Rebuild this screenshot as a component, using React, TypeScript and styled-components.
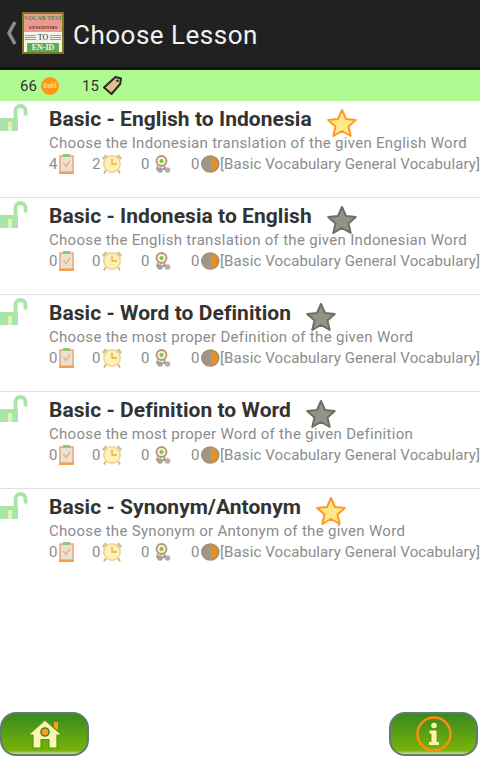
import styled, { createGlobalStyle } from "styled-components";

type Lesson = {
  title: string;
  description: string;
  tested: number;
  timed: number;
  gold: boolean;
};

const LESSONS: Lesson[] = [
  { title: "Basic - English to Indonesia", description: "Choose the Indonesian translation of the given English Word", tested: 4, timed: 2, gold: true },
  { title: "Basic - Indonesia to English", description: "Choose the English translation of the given Indonesian Word", tested: 0, timed: 0, gold: false },
  { title: "Basic - Word to Definition", description: "Choose the most proper Definition of the given Word", tested: 0, timed: 0, gold: false },
  { title: "Basic - Definition to Word", description: "Choose the most proper Word of the given Definition", tested: 0, timed: 0, gold: false },
  { title: "Basic - Synonym/Antonym", description: "Choose the Synonym or Antonym of the given Word", tested: 0, timed: 0, gold: true },
];

const LockIcon = () => (
  <svg width="28" height="28" viewBox="0 0 28 28" style={{ display: "block" }}>
    <path d="M15.500 15V8a5 5 0 0 1 10 0v4.500" fill="none" stroke="#a9e4a9" strokeWidth="3.800" />
    <rect x="-2" y="15" width="20" height="13" rx="1" fill="#a9e4a9" />
    <rect x="8" y="19" width="4" height="9" fill="#e9f0b4" />
  </svg>
);

const StarIcon = ({ gold }: { gold: boolean }) => (
  <svg width="30" height="30" viewBox="0 0 30 30">
    <path
      d="M15 2l4 9 9.800 1-7.300 6.500 2.200 9.500L15 23l-8.700 5 2.200-9.500L1.200 12l9.800-1z"
      fill={gold ? "#ffe88c" : "#939488"}
      stroke={gold ? "#ff9a1e" : "#6c6f65"}
      strokeWidth="2"
      strokeLinejoin="round"
    />
  </svg>
);

const ClipboardIcon = () => (
  <svg width="15" height="20" viewBox="0 0 15 20">
    <rect x="1" y="2" width="13" height="16.500" fill="#e6e2d8" stroke="#eca66a" strokeWidth="1.500" />
    <rect x="4" y="0" width="7" height="3" fill="#92c77e" />
    <path d="M4.500 9l2.500 3.500 4-5.500" fill="none" stroke="#ecb07a" strokeWidth="1.400" />
    <rect x="0" y="17.500" width="15" height="2.500" fill="#f2a04d" />
  </svg>
);

const ClockIcon = () => (
  <svg width="20" height="20" viewBox="0 0 20 20">
    <path d="M.8 5L4.500 1.200M19.200 5L15.500 1.200" stroke="#d6c08e" strokeWidth="2.600" />
    <path d="M4 16l-2 3.500M16 16l2 3.500" stroke="#d8b577" strokeWidth="1.800" />
    <circle cx="10" cy="10" r="8.200" fill="#fff0b4" stroke="#e8d199" strokeWidth="1.400" />
    <path d="M10 4.500V10h5" fill="none" stroke="#e9a94c" strokeWidth="1.300" />
  </svg>
);

const MedalIcon = () => (
  <svg width="18" height="18" viewBox="0 0 18 18">
    <path d="M3 10l-1 5h4zM11 10l1 5h-4z" fill="#b78d72" />
    <circle cx="7.500" cy="6" r="5" fill="#f3eee0" stroke="#b8946f" strokeWidth="1.800" />
    <circle cx="7.500" cy="6" r="2" fill="#7fc73f" />
    <circle cx="6" cy="15" r="2.800" fill="#a2a2a2" />
    <circle cx="13.500" cy="15" r="2.800" fill="#b0b0b0" />
  </svg>
);

const PieIcon = () => (
  <svg width="21" height="20" viewBox="0 0 21 20">
    <ellipse cx="10.500" cy="10" rx="9.800" ry="9.300" fill="#99988c" stroke="#b78a5a" strokeWidth="1.400" />
    <path d="M11 2.500a7.500 7.500 0 0 1 0 15z" fill="#e58f2a" />
  </svg>
);

const CoinIcon = () => (
  <svg width="18" height="18" viewBox="0 0 18 18">
    <circle cx="9" cy="9" r="9" fill="#ff980e" />
    <text x="9" y="11" fontSize="6.500" fontWeight="700" fill="#ffd9a0" textAnchor="middle" fontFamily="Roboto, sans-serif">
      Gold
    </text>
  </svg>
);

const TagIcon = () => (
  <svg width="19" height="19" viewBox="0 0 19 19">
    <path d="M12.500 1l5.500 1.500-.8 5.500-8.700 10L1 11.500z" fill="#dfc086" stroke="#2b2a22" strokeWidth="2" strokeLinejoin="round" />
    <circle cx="14.500" cy="4.800" r="1.300" fill="#2b2a22" />
  </svg>
);

const HomeIcon = () => (
  <svg width="36" height="30" viewBox="0 0 36 30">
    <rect x="27" y="3" width="4" height="9" fill="#ff9a1e" />
    <path d="M1 16L18 1l17 15h-5v13h-8v-8.500h-8V29H6V16z" fill="#fff3b0" stroke="#4d9a14" strokeWidth="1.200" strokeLinejoin="round" />
    <circle cx="18" cy="13" r="4" fill="#ff9a1e" stroke="#3d8a1a" strokeWidth="1.600" />
  </svg>
);

const InfoIcon = () => (
  <svg width="36" height="36" viewBox="0 0 36 36">
    <circle cx="18" cy="18" r="16.500" fill="none" stroke="#ff8c12" strokeWidth="2.600" />
    <circle cx="18" cy="9.500" r="2.800" fill="#fff3b0" />
    <path d="M13.500 14.500h7v11.500h2.500v3h-10v-3h2.500v-8.500h-2z" fill="#fff3b0" />
  </svg>
);

const App = () => (
  <Page>
    <GlobalStyle />
    <Header>
      <BackChevron viewBox="0 0 11 24">
        <path d="M9 1L3 12l6 11" fill="none" stroke="#8a8a8a" strokeWidth="3.600" />
      </BackChevron>
      <Logo>
        <LogoBanner>
          <LogoTop>VOCAB TEST</LogoTop>
          <LogoMiddle>SYNONYMS</LogoMiddle>
        </LogoBanner>
        <LogoToRow>
          <LogoFiller />
          TO
          <LogoFiller />
        </LogoToRow>
        <LogoBadge>EN-ID</LogoBadge>
      </Logo>
      <HeaderTitle>Choose Lesson</HeaderTitle>
    </Header>
    <StatusBar>
      <Stat>
        66 <CoinIcon />
      </Stat>
      <Stat>
        15 <TagIcon />
      </Stat>
    </StatusBar>
    <LessonList>
      {LESSONS.map((lesson) => (
        <LessonRow key={lesson.title}>
          <LockSlot>
            <LockIcon />
          </LockSlot>
          <LessonBody>
            <TitleLine>
              <LessonTitle>{lesson.title}</LessonTitle>
              <StarSlot>
                <StarIcon gold={lesson.gold} />
              </StarSlot>
            </TitleLine>
            <Description>{lesson.description}</Description>
            <Meta>
              <MetaItem $width={43}>
                {lesson.tested}
                <ClipboardIcon />
              </MetaItem>
              <MetaItem $width={49}>
                {lesson.timed}
                <ClockIcon />
              </MetaItem>
              <MetaItem $width={50} $gap={5}>
                0
                <MedalIcon />
              </MetaItem>
              <MetaItem $width={29}>
                0
                <PieIcon />
              </MetaItem>
              <Category>[Basic Vocabulary General Vocabulary]</Category>
            </Meta>
          </LessonBody>
        </LessonRow>
      ))}
    </LessonList>
    <Footer>
      <FooterButton aria-label="Home">
        <HomeIcon />
      </FooterButton>
      <FooterButton aria-label="Info">
        <InfoIcon />
      </FooterButton>
    </Footer>
  </Page>
);

export default App;

const GlobalStyle = createGlobalStyle`
  html, body {
    margin: 0;
    padding: 0;
    background: #ffffff;
  }
  body {
    font-family: "Roboto", "Liberation Sans", sans-serif;
  }
`;

const Page = styled.div`
  display: flex;
  flex-direction: column;
  width: 480px;
  height: 760px;
  overflow: hidden;
  background: #ffffff;
`;

const Header = styled.header`
  display: flex;
  align-items: center;
  height: 70px;
  flex-shrink: 0;
  padding: 0 0 1px 6px;
  background: #212121;
  box-sizing: border-box;
  border-bottom: 3px solid #141414;
`;

const BackChevron = styled.svg`
  width: 11px;
  height: 24px;
  margin-right: 5px;
`;

const Logo = styled.div`
  display: flex;
  flex-direction: column;
  align-items: center;
  width: 42px;
  height: 42px;
  flex-shrink: 0;
  box-sizing: border-box;
  border: 2px solid #7a7a18;
  background: #f4f4ea;
  font-family: "Liberation Serif", serif;
  overflow: hidden;
  margin-right: 9px;
`;

const LogoBanner = styled.div`
  width: 100%;
  height: 18px;
  background: #e99a94;
  font-weight: 700;
  text-align: center;
`;

const LogoTop = styled.div`
  color: #4f8a36;
  font-size: 6px;
  line-height: 9px;
  white-space: nowrap;
`;

const LogoMiddle = styled.div`
  color: #6e2a22;
  font-size: 5px;
  line-height: 9px;
  white-space: nowrap;
`;

const LogoToRow = styled.div`
  display: flex;
  align-items: center;
  justify-content: center;
  gap: 2px;
  width: 100%;
  height: 11px;
  color: #333333;
  font-size: 8px;
  line-height: 11px;
`;

const LogoFiller = styled.span`
  width: 11px;
  height: 5px;
  background: repeating-linear-gradient(#9a9a9a 0 1px, #f4f4ea 1px 2px);
`;

const LogoBadge = styled.div`
  width: 32px;
  height: 9px;
  background: #62a85a;
  color: #f4f4ea;
  font-size: 8px;
  font-weight: 700;
  line-height: 9px;
  text-align: center;
  border-radius: 1px;
`;

const HeaderTitle = styled.h1`
  margin: 3px 0 0;
  color: #f2f2f2;
  font-size: 26px;
  font-weight: 400;
  letter-spacing: 0.5px;
`;

const StatusBar = styled.div`
  display: flex;
  align-items: center;
  gap: 2px;
  height: 31px;
  flex-shrink: 0;
  padding-left: 20px;
  background: #b0fa92;
  box-sizing: border-box;
`;

const Stat = styled.div`
  display: flex;
  align-items: center;
  gap: 4px;
  width: 60px;
  color: #333333;
  font-size: 15px;
`;

const LessonList = styled.div`
  flex: 1;
  display: flex;
  flex-direction: column;
`;

const LessonRow = styled.div`
  display: flex;
  height: 97px;
  box-sizing: border-box;
  border-bottom: 1px solid #e0e0e0;

  &:last-child {
    border-bottom: none;
  }
`;

const LockSlot = styled.div`
  width: 49px;
  flex-shrink: 0;
  padding-top: 2px;
`;

const LessonBody = styled.div`
  flex: 1;
  min-width: 0;
  padding-top: 3px;
`;

const TitleLine = styled.div`
  display: flex;
  align-items: center;
  height: 30px;
`;

const LessonTitle = styled.div`
  color: #333333;
  font-size: 21px;
  font-weight: 700;
  letter-spacing: 0.05px;
  white-space: nowrap;
`;

const StarSlot = styled.div`
  display: flex;
  margin: 8px 0 0 15px;
`;

const Description = styled.div`
  margin-top: -1px;
  color: #8c8c8c;
  font-size: 15px;
  line-height: 20px;
  letter-spacing: 0.3px;
  white-space: nowrap;
`;

const Meta = styled.div`
  display: flex;
  align-items: center;
  height: 22px;
  color: #8c8c8c;
  font-size: 15px;
  white-space: nowrap;
`;

const MetaItem = styled.div<{ $width: number; $gap?: number }>`
  display: flex;
  align-items: center;
  gap: ${(p) => p.$gap ?? 2}px;
  width: ${(p) => p.$width}px;
  flex-shrink: 0;
`;

const Category = styled.div`
  flex-shrink: 0;
  letter-spacing: 0.11px;
`;

const Footer = styled.div`
  display: flex;
  justify-content: space-between;
  height: 44px;
  flex-shrink: 0;
  padding-right: 2px;
  margin-bottom: 4px;
`;

const FooterButton = styled.button`
  display: flex;
  align-items: center;
  justify-content: center;
  width: 89px;
  height: 44px;
  padding: 0;
  box-sizing: border-box;
  border: 2px solid #5f7a7a;
  border-radius: 16px;
  background: linear-gradient(#3a8a1c, #78b40a 92%, #cfe39a);
`;
